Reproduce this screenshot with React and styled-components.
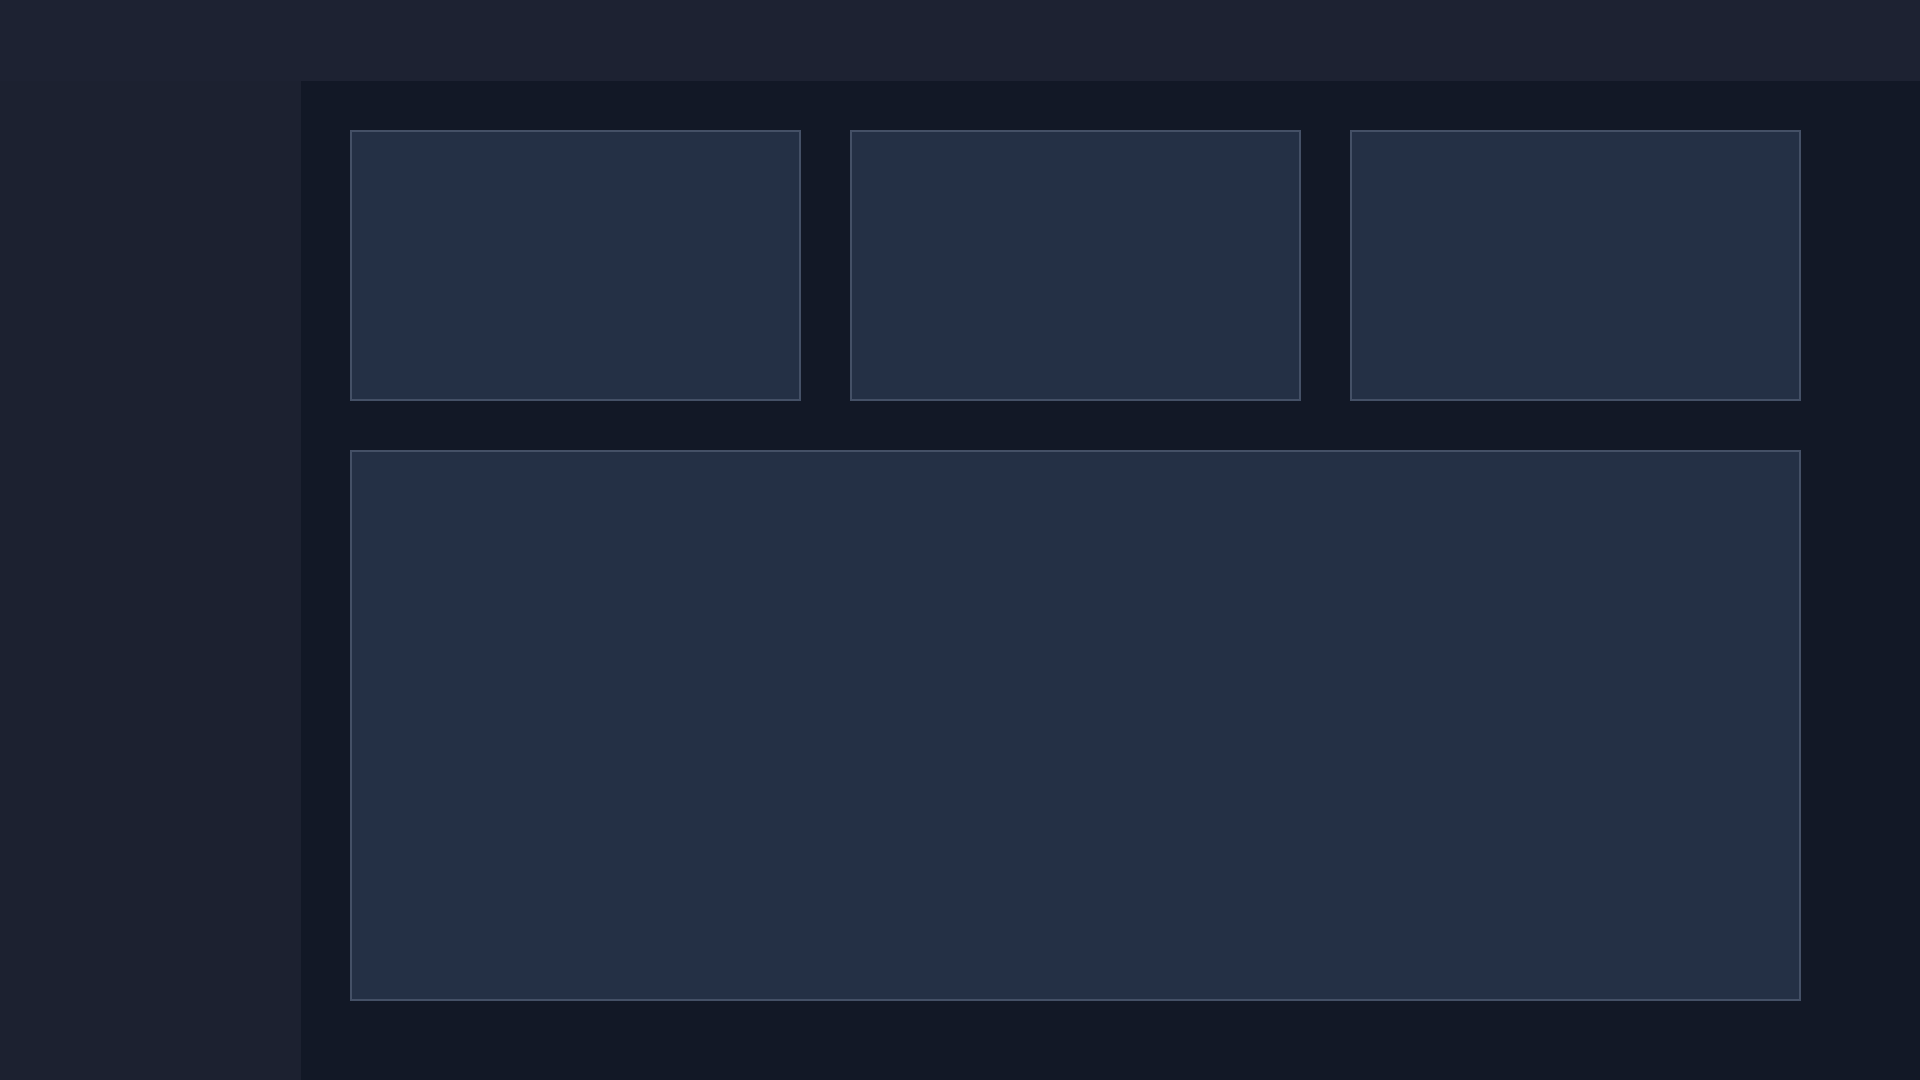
import styled, { createGlobalStyle } from "styled-components";

const Global = createGlobalStyle`
  html, body {
    margin: 0;
    padding: 0;
    background: #1c2130;
    font-family: "Inter", "Liberation Sans", sans-serif;
  }
`;

const Shell = styled.div`
  display: grid;
  grid-template-columns: 301px 1fr;
  grid-template-rows: 81px 1fr;
  width: 1920px;
  height: 1080px;
  background: #1c2130;
`;

const TopBar = styled.header`
  grid-column: 1 / 3;
  background: #1d2232;
`;

const Sidebar = styled.aside`
  background: #1c2130;
`;

const Main = styled.main`
  background: #121826;
  padding: 49px;
  box-sizing: border-box;
`;

const Grid = styled.div`
  display: grid;
  grid-template-columns: repeat(3, 451px);
  grid-template-rows: 271px 551px;
  gap: 49px;
`;

const Card = styled.div`
  grid-column: ${(p) => (p.wide ? "1 / 4" : "auto")};
  background: #243045;
  border: 2px solid #445066;
  box-sizing: border-box;
`;

export default function App() {
  return (
    <>
      <Global />
      <Shell>
        <TopBar />
        <Sidebar />
        <Main>
          <Grid>
            <Card />
            <Card />
            <Card />
            <Card wide />
          </Grid>
        </Main>
      </Shell>
    </>
  );
}
